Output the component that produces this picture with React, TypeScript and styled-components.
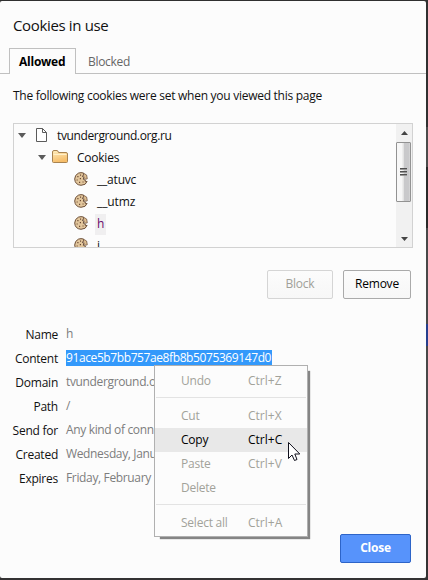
import React from "react";
import styled, { createGlobalStyle, css } from "styled-components";

const Global = createGlobalStyle`
  * { box-sizing: border-box; }
  body {
    margin: 0;
    background: #343233;
    font: 12px/16px "Open Sans", "Noto Sans", sans-serif;
    color: #111;
    overflow: hidden;
  }
`;

const Text = styled.span<{ $ls?: number }>`
  white-space: pre;
  letter-spacing: ${(p) => p.$ls ?? -0.24}px;
`;

const Screen = styled.div`
  position: relative;
  width: 428px;
  height: 580px;
  padding: 1px 2px 2px 0;
  overflow: hidden;
  background: linear-gradient(#303030 0 127px, #4b4b4b 127px 167px, #292929 167px 228px, #484848 228px 324px, #263e8d 324px 346px, #484848 346px 490px, #343233 490px);
`;

const Dialog = styled.main`
  display: flex;
  flex-direction: column;
  width: 426px;
  height: 577px;
  background: #fcfcfc;
  border-radius: 2px;
`;

const Title = styled.h1`
  margin: 0;
  padding: 12px 13px 0;
  height: 47px;
  font-size: 15px;
  line-height: 24px;
  font-weight: 400;
`;

const Tabs = styled.nav`
  display: flex;
  height: 26px;
  padding-left: 9px;
  border-bottom: 1px solid #c0c0c0;
`;

const Tab = styled.div<{ $active?: boolean }>`
  height: 26px;
  padding: 6px 0 0 12px;
  width: 70px;
  color: #666;
  ${(p) =>
    p.$active &&
    css`
      width: 67px;
      padding: 5px 0 0 9px;
      color: #000;
      font-weight: 700;
      background: #fcfcfc;
      border: 1px solid #c0c0c0;
      border-bottom: 0;
    `}
`;

const Intro = styled.p`
  margin: 14px 0 19px 13px;
  height: 16px;
`;

const Tree = styled.section`
  display: flex;
  width: 400px;
  height: 125px;
  margin-left: 13px;
  border: 1px solid #d2d2d2;
  overflow: hidden;
`;

const Rows = styled.div`
  flex: 1;
  padding-top: 1px;
`;

const Row = styled.div<{ $indent: number }>`
  display: flex;
  align-items: center;
  height: 22px;
  padding-left: ${(p) => p.$indent}px;
`;

const Icon = styled.svg`
  display: block;
  flex: none;
`;

const IconSlot = styled.div<{ $gap?: number }>`
  height: 22px;
  padding-top: 3px;
  margin-left: ${(p) => p.$gap ?? 0}px;
`;

const RowLabel = styled.div<{ $gap: number; $selected?: boolean }>`
  margin-left: ${(p) => p.$gap}px;
  padding: 2px 2px 3px;
  height: 21px;
  ${(p) => p.$selected && "background: #f0eff0; color: #6b0a6b;"}
`;

const Scrollbar = styled.div`
  display: flex;
  flex-direction: column;
  align-items: center;
  width: 16px;
  background: #f1f1f1;
`;

const Thumb = styled.div`
  display: flex;
  flex-direction: column;
  align-items: center;
  justify-content: center;
  gap: 1px;
  width: 15px;
  height: 60px;
  margin: 0 1px 0 0;
  border: 1px solid #929292;
  border-radius: 1px;
  background: linear-gradient(90deg, #f7f7f7 0 35%, #e3e3e3 50%, #c9c9cb 55% 90%, #dadada);
`;

const Grip = styled.i`
  width: 7px;
  height: 2px;
  background: linear-gradient(#505050 50%, #999 50%);
`;

const Actions = styled.div`
  display: flex;
  gap: 10px;
  margin: 22px 0 0 267px;
`;

const Button = styled.button<{ $kind?: "disabled" | "primary" }>`
  width: 68px;
  height: 29px;
  padding: 0 0 1px;
  font: inherit;
  color: #000;
  background: linear-gradient(#fcfcfc, #f7f7f7);
  border: 1px solid #aaa;
  border-radius: 2px;
  ${(p) => p.$kind === "disabled" && "width: 66px; color: #a0a098; border-color: #d5d5d5;"}
  ${(p) =>
    p.$kind === "primary" &&
    css`
      width: 71px;
      color: #fff;
      font-weight: 700;
      background: #5793fb;
      border-color: #2d64c8;
    `}
`;

const Fields = styled.dl`
  display: grid;
  grid-template-columns: 58px 1fr;
  grid-auto-rows: 24px;
  column-gap: 8px;
  margin: 23px 0 0;
`;

const Name = styled.dt`
  text-align: right;
  padding-top: 5px;
`;

const Value = styled.dd`
  margin: 0;
  padding-top: 4px;
  color: #7d7d7d;
`;

const Selection = styled.div`
  display: flex;
  width: 206px;
  height: 16px;
  color: #fff;
  line-height: 15px;
  background: #3399fb;
`;

const Footer = styled.footer`
  margin: 44px 0 0 340px;
`;

const Menu = styled.div`
  position: absolute;
  left: 154px;
  top: 365px;
  width: 154px;
  height: 172px;
  padding: 3px 0;
  background: #fcfcfc;
  border: 1px solid #b0b0b0;
  box-shadow: 4px 4px 1px -2px #858585;
`;

const MenuItem = styled.div<{ $active?: boolean }>`
  display: grid;
  grid-template-columns: 1fr 59px;
  align-items: center;
  height: 24px;
  padding-left: 26px;
  color: ${(p) => (p.$active ? "#000" : "#a2a29a")};
  background: ${(p) => (p.$active ? "#e8e8e8" : "transparent")};
`;

const Separator = styled.div`
  height: 1px;
  margin: 4px 1px 6px;
  background: #e3e3e3;
`;

const Cursor = styled.svg`
  position: absolute;
  left: 288px;
  top: 442px;
`;

const Arrow = () => (
  <IconSlot>
    <Icon width="8" height="11" viewBox="0 -5 8 11">
      <path d="M0 0H8L4 5Z" fill="#5b5b5b" />
    </Icon>
  </IconSlot>
);

const FileIcon = () => (
  <Icon width="11" height="14" viewBox="0 0 11 14">
    <path d="M.5 .5H6.5L10.5 4.5V13.5H.5Z" fill="#fff" stroke="#5b5b5b" />
    <path d="M6.5 .5V4.5H10.5" fill="none" stroke="#5b5b5b" />
  </Icon>
);

const FolderIcon = () => (
  <Icon width="16" height="14" viewBox="0 0 16 14">
    <defs>
      <linearGradient id="folder" x2="0.3" y2="1">
        <stop stopColor="#ffedbd" />
        <stop offset="1" stopColor="#f6bd69" />
      </linearGradient>
    </defs>
    <path d="M.5 2Q.5 .5 2 .5H5Q6 .5 6.5 2.5H14Q15.5 2.5 15.5 4V11.5Q15.5 12.5 14.5 12.5H1.5Q.5 12.5 .5 11.5Z" fill="url(#folder)" stroke="#a88350" />
    <path d="M1.5 4.5H14.5" stroke="#fff0c9" />
  </Icon>
);

const CookieIcon = () => (
  <Icon width="14" height="14" viewBox="0 0 14 14">
    <path d="M9.5 1Q7 .2 4.5 1.1Q.7 3 .7 7Q1 12.8 7 13.3Q12 13.2 13.1 9.4L11.4 9.6L11.2 8L9.4 7.4L9.6 5.6L8.2 4.2L9.6 3Z" fill="#e2c69c" stroke="#6d513b" />
    <path d="M9.6 1.3L12.6 3L13.3 6.8L11.4 7.3L10.2 5.7L9.4 3.8Z" fill="#dcbc8e" stroke="#745741" strokeWidth=".8" />
    <path d="M3.3 4H4.5V5.2H3.3ZM6 2.6H7.1V3.7H6ZM5.8 6H7V7.2H5.8ZM2.6 7.5H3.7V8.6H2.6ZM5 9.8H6.2V11H5ZM8.5 9.5H9.6V10.6H8.5Z" fill="#6b4932" />
  </Icon>
);

const Up = styled(Icon)`margin: 7px 0 7px;`;
const Down = styled(Icon)`margin-top: 35px;`;

const cookies = [
  { name: "__atuvc", ls: -0.2 },
  { name: "__utmz", ls: -0.1 },
  { name: "h", ls: 0, selected: true },
  { name: "i", ls: 0, selected: false },
];

const fields = [
  ["Domain", "tvunderground.org.ru"],
  ["Path", "/"],
  ["Send for", "Any kind of connection"],
  ["Created", "Wednesday, January"],
  ["Expires", "Friday, February 1"],
];

const Command = ({ label, keys, active }: { label: string; keys: string; active?: boolean }) => (
  <MenuItem $active={active}>
    <Text>{label}</Text>
    <Text $ls={0}>{keys}</Text>
  </MenuItem>
);

export default function App() {
  return (
    <>
      <Global />
      <Screen>
        <Dialog>
          <Title><Text $ls={-0.35}>Cookies in use</Text></Title>
          <Tabs>
            <Tab $active><Text>Allowed</Text></Tab>
            <Tab><Text $ls={-0.3}>Blocked</Text></Tab>
          </Tabs>
          <Intro><Text $ls={-0.27}>The following cookies were set when you viewed this page</Text></Intro>
          <Tree>
            <Rows>
              <Row $indent={4}>
                <Arrow />
                <IconSlot $gap={10}><FileIcon /></IconSlot>
                <RowLabel $gap={8}><Text $ls={-0.37}>tvunderground.org.ru</Text></RowLabel>
              </Row>
              <Row $indent={24}>
                <Arrow />
                <IconSlot $gap={6}><FolderIcon /></IconSlot>
                <RowLabel $gap={7}><Text>Cookies</Text></RowLabel>
              </Row>
              {cookies.map((c) => (
                <Row key={c.name} $indent={60}>
                  <IconSlot><CookieIcon /></IconSlot>
                  <RowLabel $gap={7} $selected={c.selected}><Text $ls={c.ls}>{c.name}</Text></RowLabel>
                </Row>
              ))}
            </Rows>
            <Scrollbar>
              <Up width="7" height="4"><path d="M0 4L3.5 0L7 4Z" fill="#444" /></Up>
              <Thumb><Grip /><Grip /><Grip /></Thumb>
              <Down width="7" height="4"><path d="M0 0H7L3.5 4Z" fill="#444" /></Down>
            </Scrollbar>
          </Tree>
          <Actions>
            <Button $kind="disabled"><Text>Block</Text></Button>
            <Button><Text>Remove</Text></Button>
          </Actions>
          <Fields>
            <Name><Text>Name</Text></Name>
            <Value><Text>h</Text></Value>
            <Name><Text>Content</Text></Name>
            <Value><Selection><Text $ls={-0.4}>91ace5b7bb757ae8fb8b5075369147d0</Text></Selection></Value>
            {fields.map(([name, value]) => (
              <React.Fragment key={name}>
                <Name><Text>{name}</Text></Name>
                <Value><Text $ls={-0.35}>{value}</Text></Value>
              </React.Fragment>
            ))}
          </Fields>
          <Footer><Button $kind="primary"><Text>Close</Text></Button></Footer>
        </Dialog>
        <Menu>
          <Command label="Undo" keys="Ctrl+Z" />
          <Separator />
          <Command label="Cut" keys="Ctrl+X" />
          <Command label="Copy" keys="Ctrl+C" active />
          <Command label="Paste" keys="Ctrl+V" />
          <Command label="Delete" keys="" />
          <Separator />
          <Command label="Select all" keys="Ctrl+A" />
        </Menu>
        <Cursor width="13" height="20" viewBox="0 0 13 20">
          <path d="M.5 .5V16.5L4 13L6.5 18.5L9 17.5L6.8 12H11.8Z" fill="#fff" stroke="#10101c" />
        </Cursor>
      </Screen>
    </>
  );
}
